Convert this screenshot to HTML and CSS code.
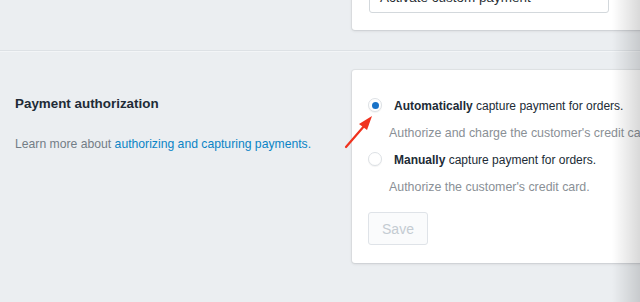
FILE: index.html
```html
<!DOCTYPE html>
<html>
<head>
<meta charset="utf-8">
<link rel="stylesheet" href="styles.css">
</head>
<body>
<div class="page">
  <section class="section section-top">
    <div class="annotation"></div>
    <div class="card card-top">
      <div class="input">Activate custom payment</div>
    </div>
  </section>
  <section class="section section-auth">
    <div class="annotation">
      <h2 class="heading">Payment authorization</h2>
      <p class="help">Learn more about <a class="link" href="#">authorizing and capturing payments.</a></p>
    </div>
    <div class="card card-auth">
      <div class="choice">
        <div class="choice-row">
          <span class="radio radio-checked"><span class="dot"></span></span>
          <span class="label"><b>Automatically</b> capture payment for orders.</span>
        </div>
        <div class="choice-help">Authorize and charge the customer's credit card.</div>
      </div>
      <div class="choice">
        <div class="choice-row">
          <span class="radio"></span>
          <span class="label"><b>Manually</b> capture payment for orders.</span>
        </div>
        <div class="choice-help">Authorize the customer's credit card.</div>
      </div>
      <button class="btn-save" disabled>Save</button>
    </div>
  </section>
  <svg class="arrow" width="40" height="40" viewBox="0 0 40 40">
    <line x1="3" y1="35" x2="22" y2="13" stroke="#f0321e" stroke-width="2.2" stroke-linecap="round"/>
    <polygon points="29,4 16,12 24,18" fill="#f0321e"/>
  </svg>
  <div class="edge-shade"></div>
</div>
</body>
</html>
```

FILE: styles.css
```css
html, body {
  margin: 0;
  padding: 0;
}
body {
  background: #ebeef1;
  font-family: "Liberation Sans", Arial, sans-serif;
  color: #212b36;
  overflow: hidden;
  width: 640px;
  height: 302px;
}
.page {
  position: relative;
  width: 640px;
  height: 302px;
  overflow: hidden;
}
.section {
  display: grid;
  grid-template-columns: 352px 330px;
}
.section-top {
  margin-top: -39px;
  padding-bottom: 20px;
  border-bottom: 1px solid #dde1e5;
  box-shadow: 0 1px 0 #f3f5f7;
}
.section-auth {
  padding-top: 19px;
}
.card {
  background: #fff;
  border-radius: 3px 0 0 3px;
  box-shadow: 0 0 0 1px rgba(63, 63, 68, 0.05), 0 1px 3px rgba(63, 63, 68, 0.15);
}
.card-top {
  padding: 16px 30px 17px 17px;
}
.input {
  height: 34px;
  line-height: 40px;
  overflow: hidden;
  border: 1px solid #d3d8dc;
  border-radius: 3px;
  padding: 0 10px;
  font-size: 13.5px;
  color: #2a3036;
  width: 218px;
}
.annotation {
  padding-left: 15px;
}
.heading {
  margin: 25px 0 0;
  font-size: 13.4px;
  font-weight: bold;
  line-height: 18px;
  color: #212b36;
}
.help {
  margin: 23px 0 0;
  font-size: 12.2px;
  line-height: 16px;
  color: #737d86;
}
.link {
  color: #0a84c6;
  text-decoration: none;
}
.card-auth {
  padding: 26px 16px 18px 16px;
  height: 149px;
}
.choice {
  margin-bottom: 9px;
}
.choice-row {
  display: flex;
  align-items: center;
  gap: 12px;
  height: 18px;
}
.radio {
  width: 12px;
  height: 12px;
  border-radius: 50%;
  border: 1px solid #dde1e5;
  background: #fff;
  display: flex;
  align-items: center;
  justify-content: center;
  flex: none;
  box-shadow: 0 1px 1px rgba(0,0,0,0.05);
}
.dot {
  width: 7px;
  height: 7px;
  border-radius: 50%;
  background: #1a73c8;
}
.label {
  font-size: 12px;
  line-height: 18px;
  padding-top: 2px;
  color: #212b36;
  white-space: nowrap;
}
.label b {
  font-weight: bold;
}
.choice-help {
  margin-top: 11px;
  padding-left: 21px;
  font-size: 12.4px;
  line-height: 16px;
  color: #8a9096;
  white-space: nowrap;
}
.btn-save {
  display: block;
  margin-top: 17px;
  width: 60px;
  height: 33px;
  border: 1px solid #dfe3e8;
  border-radius: 3px;
  background: #fafbfc;
  color: #c4cbd2;
  font-family: inherit;
  font-size: 14px;
  padding: 0;
}
.arrow {
  position: absolute;
  left: 343px;
  top: 112px;
}
.edge-shade {
  position: absolute;
  top: 0;
  right: 0;
  width: 28px;
  height: 302px;
  background: linear-gradient(to right, rgba(0,0,0,0), rgba(0,0,0,0.15));
}
```
